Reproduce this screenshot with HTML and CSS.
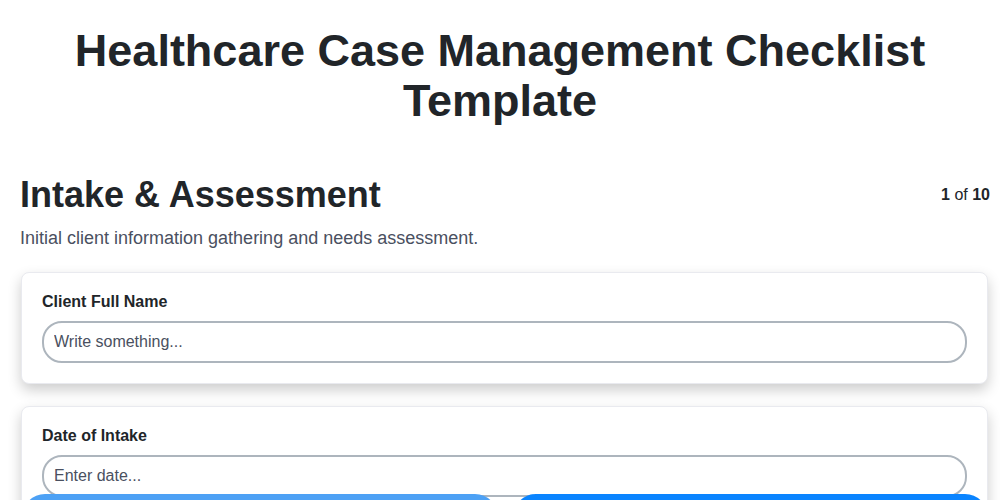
FILE: index.html
```html
<!DOCTYPE html>
<html lang="en">
<head>
  <meta charset="UTF-8">
  <title>Healthcare Case Management Checklist Template</title>
  <link rel="stylesheet" href="styles.css">
</head>
<body>
  <div class="container">
    <h1 class="page-title">Healthcare Case Management Checklist Template</h1>

    <div class="section-head">
      <h2 class="section-title">Intake &amp; Assessment</h2>
      <div class="step-count"><strong>1</strong> of <strong>10</strong></div>
    </div>
    <p class="section-desc">Initial client information gathering and needs assessment.</p>

    <div class="field-card">
      <label for="clientName">Client Full Name</label>
      <input type="text" id="clientName" placeholder="Write something...">
    </div>

    <div class="field-card">
      <label for="intakeDate">Date of Intake</label>
      <input type="text" id="intakeDate" placeholder="Enter date...">
    </div>

    <div class="field-card">
      <label for="referral">Referral Source</label>
      <input type="text" id="referral" placeholder="Write something...">
    </div>
  </div>

  <div class="nav-bar">
    <button class="nav-btn prev-btn">Previous</button>
    <button class="nav-btn next-btn">Next</button>
  </div>
</body>
</html>
```

FILE: styles.css
```css
body {
  font-family: "Liberation Sans", Arial, sans-serif;
  margin: 0;
  padding: 0;
  background-color: #fff;
  color: #212529;
}

.container {
  padding: 0 10px 80px 20px;
}

.page-title {
  font-size: 45px;
  line-height: 50px;
  text-align: center;
  margin: 26px 10px 47px 0;
}

.section-head {
  display: flex;
  justify-content: space-between;
  align-items: center;
}

.section-title {
  font-size: 36px;
  line-height: 44px;
  margin: 0;
}

.step-count {
  font-size: 16px;
}

.section-desc {
  font-size: 18px;
  color: #4a5060;
  margin: 11px 0 23px;
}

.field-card {
  background-color: #fff;
  border: 1px solid #e9eaef;
  border-radius: 8px;
  box-shadow: 0 6px 14px rgba(0, 0, 0, 0.2);
  padding: 20px;
  margin: 0 2px 22px 1px;
}

.field-card label {
  display: block;
  font-size: 16px;
  font-weight: bold;
  margin-bottom: 10px;
}

.field-card input {
  display: block;
  width: 100%;
  box-sizing: border-box;
  font-family: inherit;
  font-size: 16px;
  padding: 10px 10px;
  border: 2px solid #adb5bd;
  border-radius: 20px;
  color: #212529;
}

.field-card input::placeholder {
  color: #4a5060;
}

.nav-bar {
  position: fixed;
  left: 22px;
  right: 12px;
  bottom: -40px;
  display: flex;
  gap: 15px;
}

.nav-bar .nav-btn {
  flex: 1;
  height: 46px;
  border: none;
  border-radius: 23px;
  color: #fff;
  font-size: 16px;
  font-family: inherit;
}

.prev-btn {
  background-color: #4da1f5;
}

.next-btn {
  background-color: #0a84ff;
}
```
